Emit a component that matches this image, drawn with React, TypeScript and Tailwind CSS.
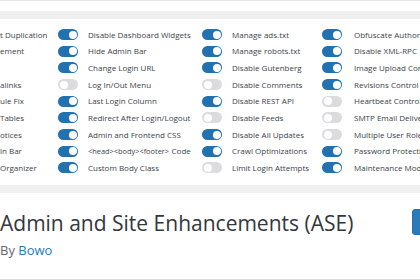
import React from "react";

// one row of the settings grid: [label, on] for each of the four columns
type Cell = { label: React.ReactNode; on?: boolean };

const rows: Cell[][] = [
    [
        { label: "t Duplication", on: true },
        { label: "Disable Dashboard Widgets", on: true },
        { label: "Manage ads.txt", on: true },
        { label: "Obfuscate Author Slugs" },
    ],
    [
        { label: "ement", on: true },
        { label: "Hide Admin Bar", on: true },
        { label: "Manage robots.txt", on: true },
        { label: "Disable XML-RPC" },
    ],
    [
        { label: "", on: true },
        { label: "Change Login URL", on: true },
        { label: "Disable Gutenberg", on: true },
        { label: "Image Upload Control" },
    ],
    [
        { label: "alinks", on: false },
        { label: "Log In/Out Menu", on: false },
        { label: "Disable Comments", on: true },
        { label: "Revisions Control" },
    ],
    [
        { label: "ule Fix", on: true },
        { label: "Last Login Column", on: true },
        { label: "Disable REST API", on: false },
        { label: "Heartbeat Control" },
    ],
    [
        { label: "Tables", on: true },
        { label: "Redirect After Login/Logout", on: false },
        { label: "Disable Feeds", on: false },
        { label: "SMTP Email Delivery" },
    ],
    [
        { label: "otices", on: true },
        { label: "Admin and Frontend CSS", on: true },
        { label: "Disable All Updates", on: false },
        { label: "Multiple User Roles" },
    ],
    [
        { label: "in Bar", on: true },
        {
            label: (
                <>
                    <span className="text-[7.4px] mr-[2.5px]">{"<head><body><footer>"}</span>Code
                </>
            ),
            on: true,
        },
        { label: "Crawl Optimizations", on: true },
        { label: "Password Protection" },
    ],
    [
        { label: "Organizer", on: true },
        { label: "Custom Body Class", on: false },
        { label: "Limit Login Attempts", on: true },
        { label: "Maintenance Mode" },
    ],
];

const Toggle = ({ on }: { on?: boolean }) => (
    <div
        className={
            on
                ? "w-[20px] h-[11px] rounded-full bg-[#2271b1] flex items-center justify-end px-[1.5px]"
                : "w-[20px] h-[11px] rounded-full bg-[#dcdcde] flex items-center justify-start px-[1.5px]"
        }
    >
        <div className="w-[8px] h-[8px] rounded-full bg-white" />
    </div>
);

const App = (): JSX.Element => {
    return (
        <div
            className="relative w-[420px] h-[280px] overflow-hidden bg-white flex flex-col"
            style={{ fontFamily: '"Open Sans", "Liberation Sans", sans-serif' }}
        >
            <div className="h-[11px] border-t border-[#e6e6e6] shrink-0" />
            <div className="h-[8px] bg-[#f0f0f1] shrink-0" />

            {/* feature grid */}
            <div className="pt-[7.3px] grid grid-cols-[58px_20px_124px_20px_100px_20px_1fr] auto-rows-[16.67px] text-[8px] text-[#3c434a] whitespace-nowrap">
                {rows.map((row, r) => (
                    <React.Fragment key={r}>
                        <div className="flex items-center overflow-hidden">{row[0].label}</div>
                        <div className="flex items-center">
                            <Toggle on={row[0].on} />
                        </div>
                        <div className="flex items-center pl-[10px] overflow-hidden">{row[1].label}</div>
                        <div className="flex items-center">
                            <Toggle on={row[1].on} />
                        </div>
                        <div className="flex items-center pl-[10px] overflow-hidden">{row[2].label}</div>
                        <div className="flex items-center">
                            <Toggle on={row[2].on} />
                        </div>
                        <div className="flex items-center pl-[12px]">{row[3].label}</div>
                    </React.Fragment>
                ))}
            </div>

            <div className="mt-[8.3px] h-[8px] bg-[#f0f0f1] shrink-0" />

            {/* plugin header */}
            <div className="mt-[16.6px] flex items-start">
                <div className="flex-1 min-w-0">
                    <div className="text-[21px] leading-[28px] text-[#32373c] whitespace-nowrap">
                        Admin and Site Enhancements (ASE)
                    </div>
                    <div className="mt-[4.4px] text-[13px] leading-[18px] text-[#646970]">
                        By <span className="text-[#2a7ab8]">Bowo</span>
                    </div>
                </div>
                <button className="shrink-0 w-[60px] h-[26px] mr-[-52px] rounded-[3px] bg-[#2b7bb9] border border-[#2271b1] text-white text-[13px] text-left pl-[12px]">
                    Download
                </button>
            </div>

            <div className="absolute left-0 right-0 bottom-0 h-[1px] bg-[#dcdcde]" />
        </div>
    );
};

export default App;
